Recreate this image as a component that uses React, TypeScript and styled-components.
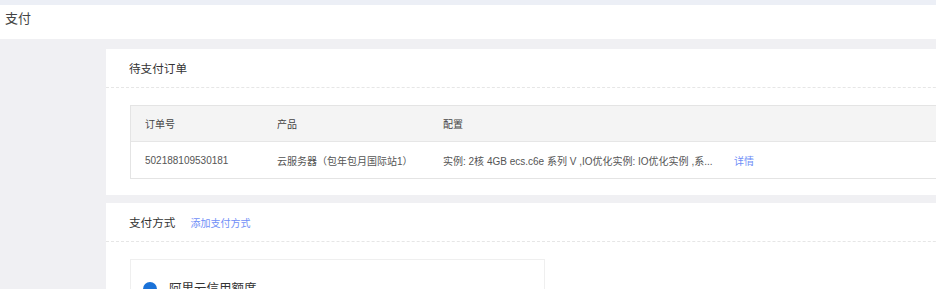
import React from "react";
import styled, { createGlobalStyle } from "styled-components";

const Global = createGlobalStyle`
  html, body { margin: 0; padding: 0; }
  body {
    width: 936px;
    height: 289px;
    overflow: hidden;
    background: #f0f0f3;
    font-family: "Liberation Sans", "Noto Sans CJK SC", sans-serif;
  }
`;

const Page = styled.div`
  display: flex;
  flex-direction: column;
  width: 936px;
`;

const TopStrip = styled.div`
  height: 5px;
  background: #eceff6;
`;

const Header = styled.div`
  height: 34px;
  background: #ffffff;
  display: flex;
  align-items: flex-start;
  padding: 6px 0 0 5px;
  box-sizing: border-box;
  font-size: 13px;
  line-height: 16px;
  color: #444;
`;

const Content = styled.div`
  display: flex;
  flex-direction: column;
  gap: 8px;
  padding: 10px 0 0 106px;
`;

const Card = styled.section`
  width: 900px;
  background: #ffffff;
  display: flex;
  flex-direction: column;
`;

const CardHead = styled.div`
  height: 39px;
  box-sizing: border-box;
  display: flex;
  align-items: center;
  gap: 15px;
  padding-left: 23px;
  border-bottom: 1px dashed #e6e6e6;
`;

const CardTitle = styled.div`
  font-size: 11.6px;
  color: #333;
`;

const Link = styled.a`
  font-size: 10px;
  color: #6f8ef7;
  text-decoration: none;
  cursor: pointer;
`;

const CardBody = styled.div<{ $bottom: number }>`
  padding: 17px 0 ${(p) => p.$bottom}px 24px;
`;

const Table = styled.div`
  border: 1px solid #e4e4e4;
  border-right: none;
`;

const Row = styled.div<{ $head?: boolean }>`
  display: grid;
  grid-template-columns: 132px 166px 291px 1fr;
  align-items: center;
  height: ${(p) => (p.$head ? 35 : 36)}px;
  padding-left: 14px;
  background: ${(p) => (p.$head ? "#f4f4f4" : "#ffffff")};
  border-top: ${(p) => (p.$head ? "none" : "1px solid #e6e6e6")};
  font-size: 10px;
  color: ${(p) => (p.$head ? "#444" : "#555")};
  white-space: nowrap;
`;

const Cell = styled.div`
  overflow: hidden;
`;

const MethodBox = styled.div`
  width: 415px;
  height: 40px;
  box-sizing: border-box;
  border: 1px solid #efefef;
  border-bottom: none;
  display: flex;
  align-items: flex-start;
  gap: 12px;
  padding: 22px 0 0 12px;
`;

const Radio = styled.span`
  width: 14px;
  height: 14px;
  border-radius: 50%;
  background: #1a72d8;
  flex: none;
`;

const MethodName = styled.div`
  font-size: 12.5px;
  color: #333;
  line-height: 14px;
`;

export default function App() {
  return (
    <Page>
      <Global />
      <TopStrip />
      <Header>支付</Header>
      <Content>
        <Card>
          <CardHead>
            <CardTitle>待支付订单</CardTitle>
          </CardHead>
          <CardBody $bottom={16}>
            <Table>
              <Row $head>
                <Cell>订单号</Cell>
                <Cell>产品</Cell>
                <Cell>配置</Cell>
                <Cell />
              </Row>
              <Row>
                <Cell>502188109530181</Cell>
                <Cell>云服务器（包年包月国际站1）</Cell>
                <Cell>实例: 2核 4GB ecs.c6e 系列 V ,IO优化实例: IO优化实例 ,系...</Cell>
                <Cell>
                  <Link>详情</Link>
                </Cell>
              </Row>
            </Table>
          </CardBody>
        </Card>
        <Card>
          <CardHead>
            <CardTitle>支付方式</CardTitle>
            <Link>添加支付方式</Link>
          </CardHead>
          <CardBody $bottom={0}>
            <MethodBox>
              <Radio />
              <MethodName>阿里云信用额度</MethodName>
            </MethodBox>
          </CardBody>
        </Card>
      </Content>
    </Page>
  );
}
